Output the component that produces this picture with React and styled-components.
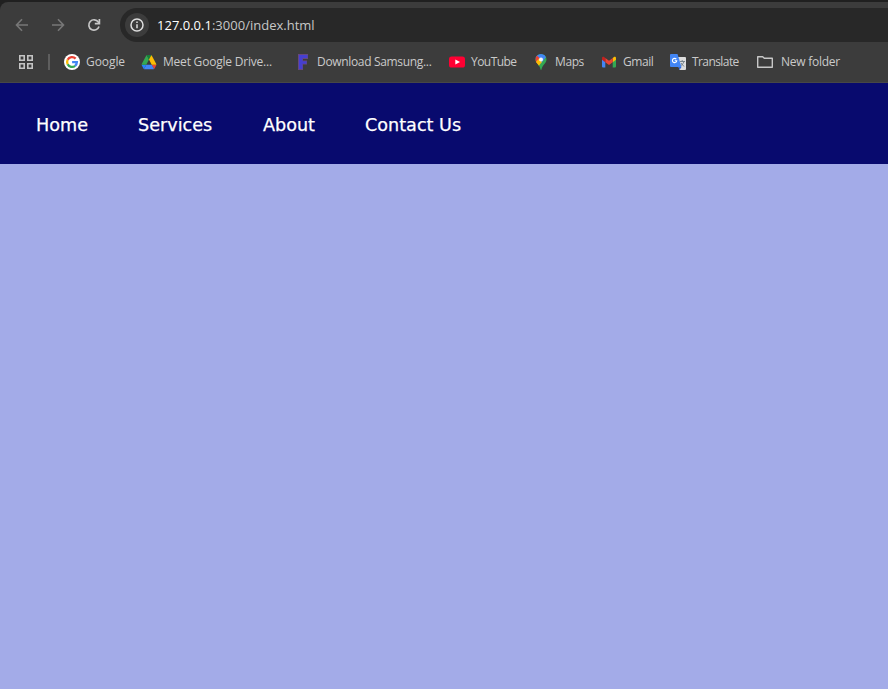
import React from "react";
import styled, { createGlobalStyle } from "styled-components";

const GlobalStyle = createGlobalStyle`
  *, *::before, *::after { box-sizing: border-box; }
  html, body { margin: 0; background: #a3abe8; }
`;

const Window = styled.div`
  height: 100vh;
  display: flex;
  flex-direction: column;
  overflow: hidden;
  background: #202020;
`;

const BrowserChrome = styled.header`
  height: 81px;
  flex: none;
  margin-top: 2px;
  background: #3c3c3c;
  border-top-left-radius: 8px;
  border-bottom: 1px solid #474747;
  font-family: "Open Sans", "Noto Sans", sans-serif;
`;

const AddressRow = styled.div`
  display: flex;
  align-items: center;
  height: 46px;
  padding-left: 12px;
`;

const ToolButton = styled.div`
  display: flex;
  align-items: center;
  justify-content: center;
  width: 20px;
  height: 20px;
  margin-right: 16px;
  color: ${(p) => (p.$active ? "#c7c7c7" : "#777777")};
`;

const AddressBar = styled.div`
  display: flex;
  align-items: center;
  flex: 1;
  height: 34px;
  padding-left: 5px;
  border-radius: 17px 0 0 17px;
  background: #282828;
`;

const InfoBadge = styled.div`
  display: flex;
  align-items: center;
  justify-content: center;
  width: 24px;
  height: 24px;
  border-radius: 50%;
  background: #3c3c3c;
`;

const Url = styled.div`
  margin-left: 8px;
  color: #c7c7c7;
  font-size: 13px;
  line-height: 20px;
  letter-spacing: ${(p) => p.$spacing}px;
  white-space: nowrap;
`;

const Host = styled.span`
  color: #ffffff;
`;

const BookmarksBar = styled.nav`
  display: flex;
  align-items: center;
  height: 28px;
  padding-left: 18px;
`;

const Divider = styled.div`
  width: 2px;
  height: 16px;
  margin: 0 14px;
  background: #5e5e5e;
`;

const Bookmark = styled.div`
  display: flex;
  align-items: center;
  flex: none;
  width: ${(p) => p.$width}px;
`;

const BookmarkIcon = styled.span`
  display: flex;
  justify-content: center;
  flex: none;
  width: 16px;
  margin-right: ${(p) => p.$gap}px;
`;

const BookmarkLabel = styled.span`
  color: #cacaca;
  font-size: 12px;
  line-height: 16px;
  letter-spacing: ${(p) => p.$spacing}px;
  white-space: nowrap;
`;

const SiteNav = styled.nav`
  display: flex;
  align-items: center;
  flex: none;
  height: 81px;
  padding: 2px 0 0 36px;
  background: #080a6e;
`;

const SiteLink = styled.a`
  flex: none;
  width: ${(p) => p.$width}px;
  color: #ffffff;
  font-family: "DejaVu Sans", sans-serif;
  font-size: 17.6px;
  line-height: 24px;
  -webkit-text-stroke: 0.25px #ffffff;
  white-space: nowrap;
`;

const PageBody = styled.main`
  flex: 1;
  background: #a3abe8;
`;

const BackIcon = () => (
  <svg width="14" height="14" viewBox="0 0 14 14" fill="none" stroke="currentColor" strokeWidth="1.6">
    <path d="M13 7H2M7 1.3 1.5 7 7 12.7" />
  </svg>
);

const ForwardIcon = () => (
  <svg width="14" height="14" viewBox="0 0 14 14" fill="none" stroke="currentColor" strokeWidth="1.6">
    <path d="M1 7h11M7 1.3 12.5 7 7 12.7" />
  </svg>
);

const ReloadIcon = () => (
  <svg width="14" height="14" viewBox="0 0 14 14" fill="none" stroke="currentColor" strokeWidth="1.7">
    <path d="M12 8.5A5.2 5.2 0 1 1 11.3 4L12.2 5.2" />
    <path d="M12.4 1v4.7H7.8" />
  </svg>
);

const InfoIcon = () => (
  <svg width="14" height="14" viewBox="0 0 14 14" fill="none" stroke="#dedede" strokeWidth="1.5">
    <circle cx="7" cy="7" r="6" />
    <path d="M7 6.2v4M7 3.6v1.5" />
  </svg>
);

const AppsIcon = () => (
  <svg width="16" height="16" viewBox="0 0 16 16" fill="none" stroke="#c4c4c4" strokeWidth="1.6">
    <path d="M1.8 1.8h4.4v4.4H1.8zM9.800 1.8h4.400v4.400H9.800zM1.8 9.800h4.400v4.400H1.8zM9.800 9.800h4.400v4.400H9.800z" />
  </svg>
);

const GoogleIcon = () => (
  <svg width="16" height="16" viewBox="0 0 16 16">
    <circle cx="8" cy="8" r="8" fill="#fff" />
    <g fill="none" strokeWidth="2.3">
      <path d="M11.6 4.6A4.9 4.9 0 0 0 3.65 5.8" stroke="#ea4335" />
      <path d="M3.65 5.8a4.9 4.9 0 0 0 0 4.4" stroke="#fbbc05" />
      <path d="M3.65 10.2a4.9 4.9 0 0 0 7.5 1.6" stroke="#34a853" />
      <path d="M11.15 11.8A4.9 4.9 0 0 0 12.9 8.1H8.1" stroke="#4285f4" />
    </g>
  </svg>
);

const DriveIcon = () => (
  <svg width="16" height="16" viewBox="-4 0 95.3 87.3" preserveAspectRatio="none">
    <g transform="translate(0 5)">
      <path d="m6.6 66.85 3.85 6.65c.8 1.4 1.95 2.5 3.3 3.3L27.5 53H0c0 1.55.4 3.1 1.2 4.5z" fill="#2684fc" />
      <path d="M43.65 25 29.9 1.2c-1.35.8-2.5 1.9-3.3 3.3L1.2 48.5A9 9 0 0 0 0 53h27.5z" fill="#34a853" />
      <path d="M73.55 76.8c1.35-.8 2.5-1.9 3.3-3.3l9.25-16c.8-1.4 1.2-2.95 1.2-4.5H59.8l5.85 11.5z" fill="#ea4335" />
      <path d="M43.65 25 57.4 1.2C56.05.4 54.5 0 52.9 0H34.4c-1.6 0-3.15.45-4.5 1.2z" fill="#188038" />
      <path d="M59.8 53H27.5L13.75 76.8c1.35.8 2.9 1.2 4.5 1.2h50.8c1.6 0 3.15-.45 4.5-1.2z" fill="#4285f4" />
      <path d="M73.4 26.5 60.7 4.5c-.8-1.4-1.95-2.5-3.3-3.3L43.65 25 59.8 53h27.45c0-1.55-.4-3.1-1.2-4.5z" fill="#fbbc04" />
    </g>
  </svg>
);

const FirmwareIcon = () => (
  <svg width="16" height="16" viewBox="0 0 16 16">
    <path d="M4 0h10v5H9v1.5h4v4H9V16H4z" fill="#66477e" />
    <path d="M5 1h8.5v3H8.5v3.3h4v2.5h-4V15H5z" fill="#453fd0" />
  </svg>
);

const YouTubeIcon = () => (
  <svg width="16" height="16" viewBox="0 0 16 16">
    <rect y="2.5" width="16" height="11" rx="2.6" fill="#ff0033" />
    <path d="M6.3 5.5v5L11 8z" fill="#fff" />
  </svg>
);

const MapsIcon = () => (
  <svg width="16" height="16" viewBox="0 0 16 16">
    <defs>
      <clipPath id="mapPin">
        <path d="M8 0a5.5 5.5 0 0 0-5.5 5.5c0 2 1 3.2 2.1 4.5C6 11.7 7.1 13 7.5 15.5Q8 16.4 8.5 15.5C9 13 10 11.7 11.4 10c1.1-1.3 2.1-2.5 2.1-4.5A5.5 5.5 0 0 0 8 0z" />
      </clipPath>
    </defs>
    <g clipPath="url(#mapPin)">
      <path d="M0 0h16v16H0z" fill="#34a853" />
      <path d="M2 0h9.5L13 3 8 9.5 2 4z" fill="#4285f4" />
      <path d="M0 1.5h4L8 5.5 2 12z" fill="#ea4335" />
      <path d="M1 10 6 4.5l3 3.5-4.3 5z" fill="#fbbc04" />
    </g>
    <circle cx="8" cy="5.5" r="2" fill="#f5f5f5" />
  </svg>
);

const GmailIcon = () => (
  <svg width="16" height="16" viewBox="0 0 16 16">
    <path d="M1 5v7.5q0 1 1 1h2.3V7z" fill="#4285f4" />
    <path d="M15 5v7.5q0 1-1 1h-2.3V7z" fill="#34a853" />
    <path d="M11.7 4v4.3L15 5.8V4.3c0-1.6-1.5-1.7-2.3-1.1z" fill="#fbbc04" />
    <path d="M4.3 8.3V4L8 6.8 11.7 4v4.3L8 11z" fill="#ea4335" />
    <path d="M1 4.3v1.5l3.3 2.5V4l-1-.8C2.5 2.6 1 2.7 1 4.3z" fill="#c5221f" />
  </svg>
);

const TranslateIcon = () => (
  <svg width="16" height="16" viewBox="0 0 16 16">
    <path d="M6 3h9q1 0 1 1v11q0 1-1 1H9.5z" fill="#dddddd" />
    <path d="m8.5 13 3 0-2 3z" fill="#3367d6" />
    <path d="M1 0h6.5l4 13H1q-1 0-1-1V1q0-1 1-1z" fill="#4285f4" />
    <path d="M6.3 5.2A2.15 2.15 0 1 0 6.7 6.8H4.7" fill="none" stroke="#fff" strokeWidth="1.1" />
    <path d="M10 7.5h5M12.2 6v1.5M14 7.5q-.5 2.5-3 4M11 9l3 3.5" fill="none" stroke="#6f7d85" strokeWidth=".9" />
  </svg>
);

const FolderIcon = () => (
  <svg width="16" height="16" viewBox="0 0 16 16" fill="none" stroke="#c7c7c7" strokeWidth="1.4">
    <path d="M.7 13.3V2.7h5l1.6 1.6h8v9z" strokeLinejoin="round" />
  </svg>
);

const bookmarks = [
  { label: "Google", Icon: GoogleIcon, width: 77, gap: 6, spacing: -0.07 },
  { label: "Meet Google Drive...", Icon: DriveIcon, width: 153, gap: 6, spacing: -0.21 },
  { label: "Download Samsung...", Icon: FirmwareIcon, width: 155, gap: 7, spacing: -0.33 },
  { label: "YouTube", Icon: YouTubeIcon, width: 84, gap: 6, spacing: -0.55 },
  { label: "Maps", Icon: MapsIcon, width: 68, gap: 6, spacing: -0.4 },
  { label: "Gmail", Icon: GmailIcon, width: 69, gap: 6, spacing: -0.45 },
  { label: "Translate", Icon: TranslateIcon, width: 87, gap: 6, spacing: -0.58 },
  { label: "New folder", Icon: FolderIcon, width: 90, gap: 8, spacing: -0.25 },
];

const links = [
  { label: "Home", width: 102 },
  { label: "Services", width: 125 },
  { label: "About", width: 102 },
  { label: "Contact Us", width: 110 },
];

export default function App() {
  return (
    <Window>
      <GlobalStyle />
      <BrowserChrome>
        <AddressRow>
          <ToolButton><BackIcon /></ToolButton>
          <ToolButton><ForwardIcon /></ToolButton>
          <ToolButton $active><ReloadIcon /></ToolButton>
          <AddressBar>
            <InfoBadge><InfoIcon /></InfoBadge>
            <Url $spacing={0.01}><Host>127.0.0.1</Host>:3000/index.html</Url>
          </AddressBar>
        </AddressRow>
        <BookmarksBar>
          <AppsIcon />
          <Divider />
          {bookmarks.map(({ label, Icon, width, gap, spacing }) => (
            <Bookmark key={label} $width={width}>
              <BookmarkIcon $gap={gap}><Icon /></BookmarkIcon>
              <BookmarkLabel $spacing={spacing}>{label}</BookmarkLabel>
            </Bookmark>
          ))}
        </BookmarksBar>
      </BrowserChrome>
      <SiteNav>
        {links.map(({ label, width }) => (
          <SiteLink key={label} $width={width}>{label}</SiteLink>
        ))}
      </SiteNav>
      <PageBody />
    </Window>
  );
}
